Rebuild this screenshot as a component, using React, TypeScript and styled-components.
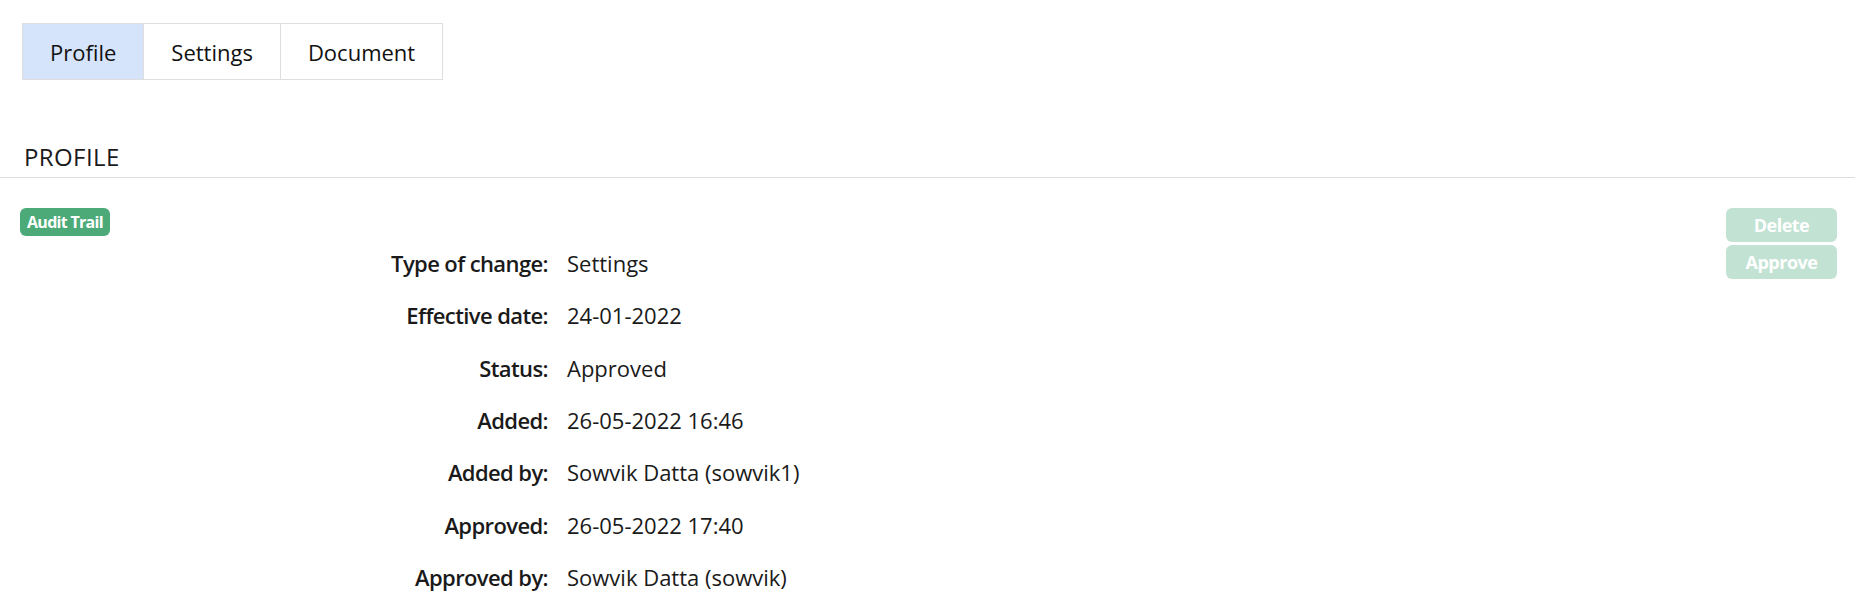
import React from 'react';
import styled, { createGlobalStyle } from 'styled-components';

const GlobalStyle = createGlobalStyle`
  body {
    margin: 0;
    background: #fff;
    color: #1a1a1a;
    font-family: "Open Sans", "Noto Sans", sans-serif;
  }
`;

const Page = styled.div`
  width: 100%;
  padding-top: 23px;
`;

const TabBar = styled.div`
  display: inline-flex;
  margin-left: 22px;
  border: 1px solid #dedede;
`;

const Tab = styled.button<{ active?: boolean }>`
  height: 55px;
  padding: 0 27px;
  border: 0;
  border-left: 1px solid #dedede;
  background: ${(p) => (p.active ? '#d5e4fb' : '#fff')};
  color: #111;
  font-family: inherit;
  font-size: 22px;
  cursor: pointer;
  &:first-child {
    border-left: 0;
  }
`;

const Heading = styled.h2`
  margin: 62px 0 0;
  padding: 0 0 5px 24px;
  border-bottom: 1px solid #dcdcdc;
  font-size: 24px;
  font-weight: 400;
  line-height: 30px;
  letter-spacing: 0.4px;
`;

const Content = styled.div`
  display: flex;
  justify-content: space-between;
  padding: 30px 18px 0 20px;
`;

const Main = styled.div`
  display: flex;
  flex-direction: column;
`;

const Badge = styled.span`
  align-self: flex-start;
  height: 28px;
  padding: 0 7px;
  border-radius: 6px;
  background: #4caa78;
  color: #fff;
  font-size: 16px;
  font-weight: 700;
  line-height: 28px;
  letter-spacing: -0.7px;
`;

const Details = styled.dl`
  display: grid;
  grid-template-columns: 528px auto;
  column-gap: 19px;
  grid-auto-rows: 52.3px;
  align-items: center;
  margin: 1px 0 0;
`;

const Label = styled.dt`
  text-align: right;
  font-size: 22px;
  font-weight: 600;
  letter-spacing: -0.6px;
`;

const Value = styled.dd`
  margin: 0;
  font-size: 22px;
`;

const Actions = styled.div`
  display: flex;
  flex-direction: column;
  gap: 3px;
`;

const ActionButton = styled.button`
  width: 111px;
  height: 34px;
  border: 0;
  border-radius: 6px;
  background: #c2e2d3;
  color: #fff;
  font-family: inherit;
  font-size: 18px;
  font-weight: 700;
  letter-spacing: -0.5px;
  cursor: not-allowed;
`;

const rows: [string, string][] = [
  ['Type of change:', 'Settings'],
  ['Effective date:', '24-01-2022'],
  ['Status:', 'Approved'],
  ['Added:', '26-05-2022 16:46'],
  ['Added by:', 'Sowvik Datta (sowvik1)'],
  ['Approved:', '26-05-2022 17:40'],
  ['Approved by:', 'Sowvik Datta (sowvik)'],
];

const App: React.FC = () => (
  <Page>
    <GlobalStyle />
    <TabBar>
      <Tab active>Profile</Tab>
      <Tab>Settings</Tab>
      <Tab>Document</Tab>
    </TabBar>
    <Heading>PROFILE</Heading>
    <Content>
      <Main>
        <Badge>Audit Trail</Badge>
        <Details>
          {rows.map(([label, value]) => (
            <React.Fragment key={label}>
              <Label>{label}</Label>
              <Value>{value}</Value>
            </React.Fragment>
          ))}
        </Details>
      </Main>
      <Actions>
        <ActionButton disabled>Delete</ActionButton>
        <ActionButton disabled>Approve</ActionButton>
      </Actions>
    </Content>
  </Page>
);

export default App;
